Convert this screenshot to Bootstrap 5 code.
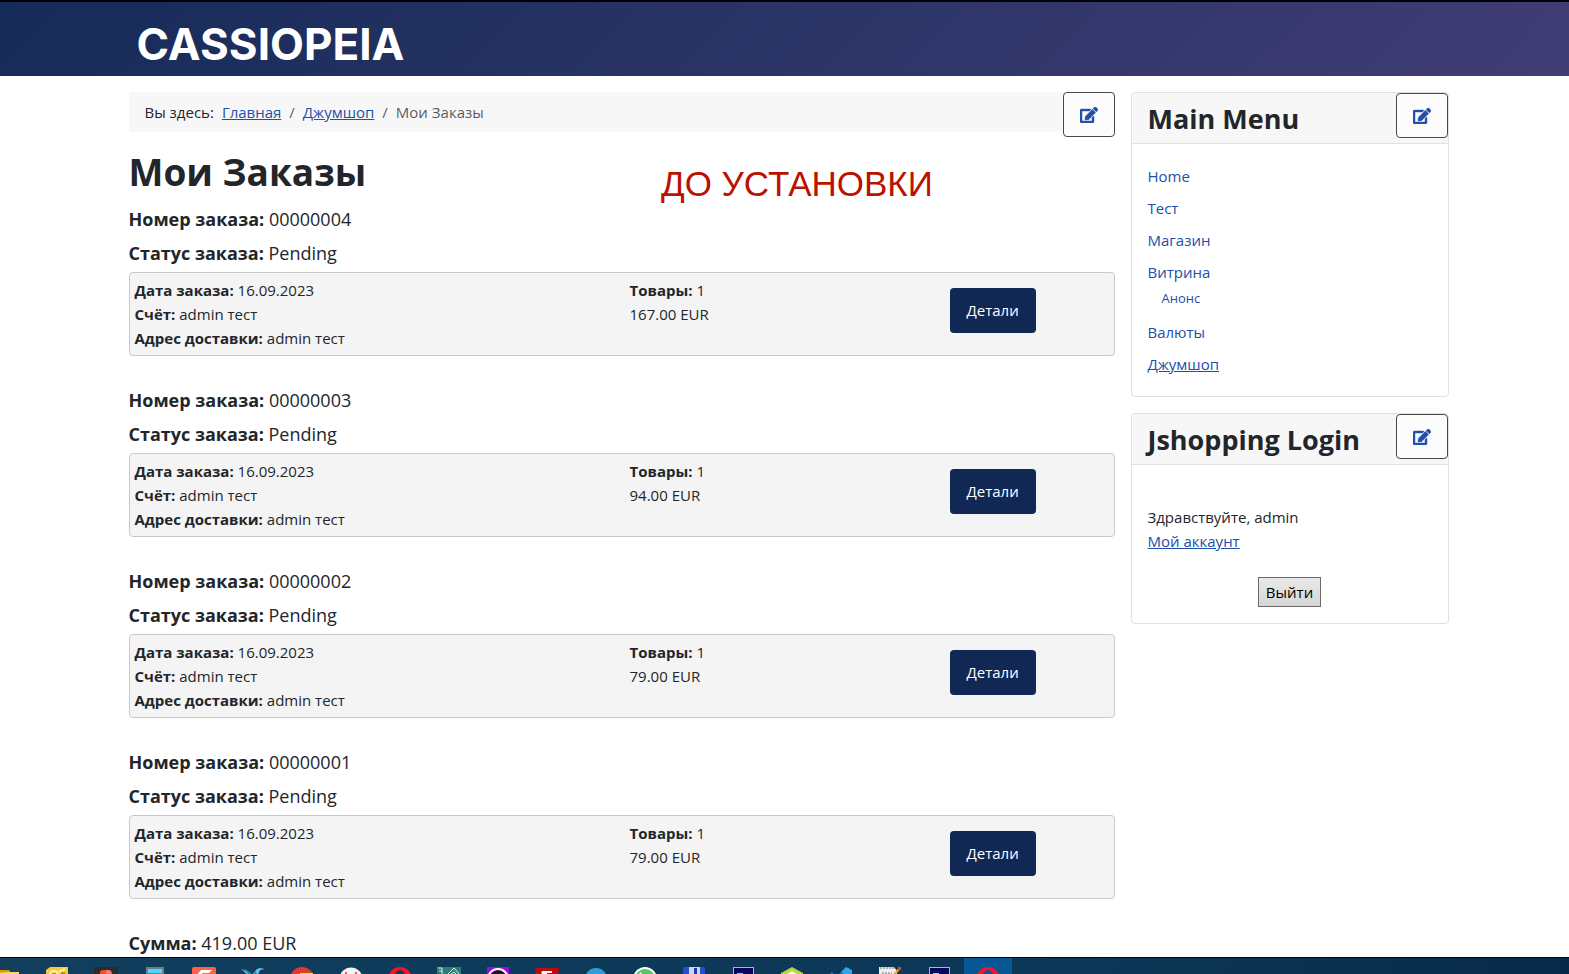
<!DOCTYPE html>
<html lang="ru">
<head>
<meta charset="utf-8">
<meta name="viewport" content="width=device-width, initial-scale=1">
<title>Мои Заказы</title>
<link href="https://cdn.jsdelivr.net/npm/bootstrap@5.3.0/dist/css/bootstrap.min.css" rel="stylesheet">
<style>
:root { --shop-link: #224faa; --shop-navy: #112855; }
body { font-family: "Open Sans", "Noto Sans", sans-serif; font-size: 15px; line-height: 24px; color: #22262a; }
a { color: var(--shop-link); }
.shop-wrap { max-width: 1344px; }
.site-head { background: linear-gradient(135deg, #152b57, #413d75); border-top: 2px solid #00000d; height: 76px; padding-left: 8px; }
.brand { font-family: Inter, sans-serif; font-weight: 700; font-size: 44px; line-height: 52px; color: #fff; }
.site-body { padding-left: 8px; }
.site-grid { display: grid; grid-template-columns: repeat(12, 1fr); gap: 16px; }
.main-area { grid-column: span 9; }
.side-area { grid-column: span 3; }
@media (max-width: 900px) { .main-area, .side-area { grid-column: span 12; } }
.crumb-bar { background: #f7f7f7; }
.btn-edit { position: absolute; top: 0; right: 0; width: 52px; height: 45px; background: #fcfcfc; border: 1px solid #484848; border-radius: 4px; padding: 1px 0 0; display: flex; align-items: center; justify-content: center; }
h1 { font-size: 37px; line-height: 48px; font-weight: 700; }
.stamp { font-family: "Liberation Sans", sans-serif; font-size: 35px; line-height: 40px; color: #ba1200; top: 72px; left: 54%; }
.order-line { font-size: 18px; line-height: 22px; margin-bottom: 12px; }
.order-line + .order-line { margin-bottom: 8px; }
.order { margin-bottom: 33px; }
.order-box { display: grid; grid-template-columns: 495fr 320fr 159fr; background: #f4f4f4; border: 1px solid #c8c8c8; border-radius: 4px; padding: 5px; }
.btn-shop { background: var(--shop-navy); color: #fff; font-size: 15px; line-height: 24px; padding: 10px 17px 11px; margin-top: 10px; border: 0; border-radius: 4px; }
.btn-shop:hover { background: #0b1c3d; color: #fff; }
.side-card { border-color: #dfe1e5; border-radius: 4px; }
.side-card .card-header { background: #f7f7f7; border-color: #dfe1e5; padding: 8px 16px 6px; }
.side-card h3 { font-size: 27px; line-height: 36px; font-weight: 700; }
.side-nav a { display: block; padding: 4px 0; text-decoration: none; }
.side-nav a[aria-current] { text-decoration: underline; }
.side-nav .side-sub a { font-size: 13px; line-height: 20px; padding: 0 0 8px 14px; }
.btn-out { background: linear-gradient(#e9e9e9, #d6d6d6); border: 1px solid #6b6b6b; padding: 2px 7px; color: #000; }
.task-bar { height: 17px; background: linear-gradient(90deg, #113f5d, #0c3656 70%, #082a49); border-top: 1px solid #000712; }
.task-bar ul { gap: 1px; margin-left: -16px; }
.task-bar li { width: 48px; flex: none; padding: 9px 12px 0; }
.task-bar svg { display: block; }
.task-bar .running { background: #055796; }
</style>
</head>
<body>
<svg class="d-none" aria-hidden="true">
  <symbol id="pen-square" viewBox="0 0 576 512"><path fill="#224faa" stroke="#224faa" stroke-width="14" d="M402.600 83.200l90.200 90.200c3.800 3.800 3.800 10 0 13.800L274.400 405.600l-92.800 10.300c-12.400 1.400-22.900-9.100-21.500-21.500l10.300-92.800L388.800 83.200c3.800-3.800 10-3.800 13.800 0zm162-22.900l-48.800-48.800c-15.200-15.200-39.900-15.200-55.200 0l-35.400 35.400c-3.800 3.800-3.800 10 0 13.800l90.200 90.200c3.800 3.800 10 3.800 13.800 0l35.400-35.400c15.200-15.300 15.200-40 0-55.200zM384 346.200V448H64V128h229.800c3.200 0 6.200-1.300 8.500-3.500l40-40c7.600-7.600 2.200-20.500-8.500-20.500H48C21.500 64 0 85.500 0 112v352c0 26.500 21.500 48 48 48h352c26.500 0 48-21.500 48-48V306.200c0-10.700-12.900-16-20.500-8.500l-40 40c-2.200 2.300-3.500 5.300-3.500 8.500z"/></symbol>
</svg>

<header class="site-head">
  <div class="container-fluid shop-wrap pt-3"><a class="brand text-decoration-none d-inline-block ps-2" href="#">CASSIOPEIA</a></div>
</header>

<div class="site-body">
<div class="container-fluid shop-wrap site-grid pt-3">
  <main class="main-area position-relative">
    <nav class="crumb-bar position-relative d-flex px-3 py-2" aria-label="Вы здесь">
      <span class="me-2">Вы здесь:</span>
      <ol class="breadcrumb mb-0">
        <li class="breadcrumb-item"><a href="#">Главная</a></li>
        <li class="breadcrumb-item"><a href="#">Джумшоп</a></li>
        <li class="breadcrumb-item active" aria-current="page">Мои Заказы</li>
      </ol>
      <button type="button" class="btn-edit" aria-label="Изменить"><svg width="18" height="16"><use href="#pen-square"/></svg></button>
    </nav>
    <div class="stamp position-absolute">ДО УСТАНОВКИ</div>
    <h1 class="mt-3 mb-2 pb-1">Мои Заказы</h1>

    <section class="order">
      <div class="order-line"><b>Номер заказа:</b> 00000004</div>
      <div class="order-line"><b>Статус заказа:</b> Pending</div>
      <div class="order-box">
        <div><b>Дата заказа:</b> 16.09.2023<br><b>Счёт:</b> admin тест<br><b>Адрес доставки:</b> admin тест</div>
        <div><b>Товары:</b> 1<br>167.00 EUR</div>
        <div><button type="button" class="btn btn-shop">Детали</button></div>
      </div>
    </section>
    <section class="order">
      <div class="order-line"><b>Номер заказа:</b> 00000003</div>
      <div class="order-line"><b>Статус заказа:</b> Pending</div>
      <div class="order-box">
        <div><b>Дата заказа:</b> 16.09.2023<br><b>Счёт:</b> admin тест<br><b>Адрес доставки:</b> admin тест</div>
        <div><b>Товары:</b> 1<br>94.00 EUR</div>
        <div><button type="button" class="btn btn-shop">Детали</button></div>
      </div>
    </section>
    <section class="order">
      <div class="order-line"><b>Номер заказа:</b> 00000002</div>
      <div class="order-line"><b>Статус заказа:</b> Pending</div>
      <div class="order-box">
        <div><b>Дата заказа:</b> 16.09.2023<br><b>Счёт:</b> admin тест<br><b>Адрес доставки:</b> admin тест</div>
        <div><b>Товары:</b> 1<br>79.00 EUR</div>
        <div><button type="button" class="btn btn-shop">Детали</button></div>
      </div>
    </section>
    <section class="order">
      <div class="order-line"><b>Номер заказа:</b> 00000001</div>
      <div class="order-line"><b>Статус заказа:</b> Pending</div>
      <div class="order-box">
        <div><b>Дата заказа:</b> 16.09.2023<br><b>Счёт:</b> admin тест<br><b>Адрес доставки:</b> admin тест</div>
        <div><b>Товары:</b> 1<br>79.00 EUR</div>
        <div><button type="button" class="btn btn-shop">Детали</button></div>
      </div>
    </section>
    <div class="order-line"><b>Сумма:</b> 419.00 EUR</div>
  </main>

  <aside class="side-area d-flex flex-column gap-3">
    <div class="card side-card">
      <div class="card-header"><h3 class="mb-0">Main Menu</h3></div>
      <button type="button" class="btn-edit" aria-label="Изменить"><svg width="18" height="16"><use href="#pen-square"/></svg></button>
      <nav class="card-body side-nav" aria-label="Main Menu">
        <ul class="list-unstyled mb-0">
          <li><a href="#">Home</a></li>
          <li><a href="#">Тест</a></li>
          <li><a href="#">Магазин</a></li>
          <li><a href="#">Витрина</a></li>
          <li class="side-sub"><a href="#">Анонс</a></li>
          <li><a href="#">Валюты</a></li>
          <li><a href="#" aria-current="page">Джумшоп</a></li>
        </ul>
      </nav>
    </div>
    <div class="card side-card">
      <div class="card-header"><h3 class="mb-0">Jshopping Login</h3></div>
      <button type="button" class="btn-edit" aria-label="Изменить"><svg width="18" height="16"><use href="#pen-square"/></svg></button>
      <div class="card-body">
        <div class="pt-4">Здравствуйте, admin</div>
        <a href="#">Мой аккаунт</a>
        <div class="text-center pt-4"><button type="button" class="btn-out">Выйти</button></div>
      </div>
    </div>
  </aside>
</div>
</div>

<footer class="task-bar fixed-bottom overflow-hidden">
  <ul class="list-unstyled d-flex mb-0">
    <li><svg width="24" height="8"><path fill="#d99a00" d="M0 3h13l2 3H0z"/><path fill="#ffd768" d="M0 6l13-1h10v3H0z"/></svg></li>
    <li><svg width="24" height="8"><path fill="#f5c93c" d="M1 3l4-3h18v8H1z"/><path fill="none" stroke="#fff0b0" stroke-width="2" d="M5 8a4 4 0 0 1 8 0m1-3l6-3"/><path fill="#c78a10" d="M7 6h4v2H7zM16 5h4v3h-4z"/></svg></li>
    <li><svg width="24" height="8"><rect width="24" height="14" rx="1" fill="#2b2b2d"/><path fill="#ff4a22" d="M12 3v5H6V6a3 3 0 0 1 3-3z"/><path fill="#ff776a" d="M12 3h3a3 3 0 0 1 2 5h-5z"/></svg></li>
    <li><svg width="24" height="8"><rect x="3" width="18" height="14" fill="#6f7d87"/><rect x="5" y="2" width="14" height="4" fill="#45dafa"/></svg></li>
    <li><svg width="24" height="8"><rect width="24" height="14" rx="2" fill="#ff6246"/><path fill="#fff" d="M9 3h11l-3 3h-6l-3 2H5z"/></svg></li>
    <li><svg width="24" height="8"><path fill="#63c3e8" d="M0 2l8 3 3 3H7zM11 8l5-6 3-1 5 1-5 1-2 5z"/><path fill="#2a80ae" d="M3 1l9 7h-4zM12 8l3-4 1 4z"/></svg></li>
    <li><svg width="24" height="8"><circle cx="12" cy="12" r="12" fill="#de3b2e"/><path fill="#ffd23f" d="M10 6h13v2H10z"/></svg></li>
    <li><svg width="24" height="8"><circle cx="12" cy="12" r="11.500" fill="#f2f2f2"/><path stroke="#e06060" stroke-width="2" d="M7 5v3m10-3v3"/></svg></li>
    <li><svg width="24" height="8"><circle cx="12" cy="12" r="12" fill="#f3162b"/><ellipse cx="12" cy="12" rx="6" ry="9" fill="#113b5a"/></svg></li>
    <li><svg width="24" height="8"><rect width="24" height="14" fill="#287d78"/><path fill="none" stroke="#d8eee4" d="M1 1h4v3H2m3 0v4M10 8l7-7 6 7m-10 0l4-3 3 3"/></svg></li>
    <li><svg width="24" height="8"><rect x="1" width="22" height="14" fill="#a305e8"/><circle cx="12" cy="12" r="10" fill="#20102c" stroke="#fff" stroke-width="2"/></svg></li>
    <li><svg width="24" height="8"><path fill="#b90b10" d="M0 1h24l-1 7H1z"/><path fill="#fff" d="M7 4h10v2h-5v2H6z"/></svg></li>
    <li><svg width="24" height="8"><circle cx="12" cy="12" r="11" fill="#2b9fdc"/></svg></li>
    <li><svg width="24" height="8"><circle cx="12" cy="12" r="11" fill="#4fca65" stroke="#fff" stroke-width="2"/><path fill="#fff" d="M6 7l2-2 1 3H6z"/></svg></li>
    <li><svg width="24" height="8"><rect x="1" width="22" height="14" rx="1" fill="#2450cf"/><rect x="7" width="11" height="8" fill="#cdd7e3"/><path fill="#1c3da5" d="M12 1h3v7h-3z"/></svg></li>
    <li><svg width="24" height="8"><rect x="2.500" y=".5" width="20" height="14" fill="#08075a" stroke="#84c3f0"/><path fill="#84c3f0" d="M6 6h6v2H6z"/></svg></li>
    <li><svg width="24" height="8"><path fill="#b8d34c" d="M12 0l11 6v2H1V6z"/><path fill="#f4f7dd" d="M12 4l5 3v1H7V7z"/></svg></li>
    <li><svg width="24" height="8"><path fill="#29a8ee" d="M17 0l6 3v5h-9l-2-3z"/><path fill="#0d79bd" d="M1 7l2-2 3 3H1zM12 5l4 3h-7z"/></svg></li>
    <li><svg width="24" height="8"><path fill="#ededeb" d="M1 0h15l3 4v4H1z"/><path stroke="#6f7a7e" stroke-dasharray="2 1" d="M2 1h14M4 6h10"/><path stroke="#e3a234" stroke-width="2" d="M21 2l-5 6"/><path fill="#d04b3f" d="M20 0h3v3h-3z"/></svg></li>
    <li><svg width="24" height="8"><rect x="2.500" y=".5" width="20" height="14" fill="#08075a" stroke="#84c3f0"/><path fill="#84c3f0" d="M6 6h6v2H6z"/></svg></li>
    <li class="running"><svg width="24" height="8"><circle cx="12" cy="12" r="12" fill="#f3162b"/><ellipse cx="12" cy="12" rx="6" ry="9" fill="#055796"/></svg></li>
  </ul>
</footer>
<script src="https://cdn.jsdelivr.net/npm/bootstrap@5.3.0/dist/js/bootstrap.bundle.min.js"></script>
</body>
</html>
